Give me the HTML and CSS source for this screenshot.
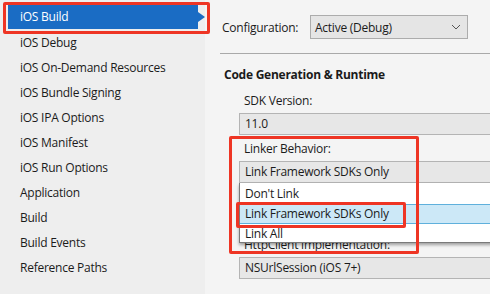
FILE: index.html
```html
<!DOCTYPE html>
<html lang="en">
<head>
    <meta charset="UTF-8">
    <title>iOS Build</title>
    <link rel="stylesheet" href="styles.css">
</head>
<body>
    <div class="sidebar">
        <ul class="nav">
            <li class="nav-item active">iOS Build</li>
            <li class="nav-item">iOS Debug</li>
            <li class="nav-item">iOS On-Demand Resources</li>
            <li class="nav-item">iOS Bundle Signing</li>
            <li class="nav-item">iOS IPA Options</li>
            <li class="nav-item">iOS Manifest</li>
            <li class="nav-item">iOS Run Options</li>
            <li class="nav-item">Application</li>
            <li class="nav-item">Build</li>
            <li class="nav-item">Build Events</li>
            <li class="nav-item">Reference Paths</li>
        </ul>
    </div>

    <div class="main">
        <div class="config-row">
            <span class="config-label">Configuration:</span>
            <div class="combo config-combo">
                <span>Active (Debug)</span>
                <svg class="chevron" width="10" height="6" viewBox="0 0 10 6">
                    <path d="M1 1 L5 5 L9 1" fill="none" stroke="#555" stroke-width="1"/>
                </svg>
            </div>
        </div>

        <div class="separator"></div>

        <h3 class="section-title">Code Generation &amp; Runtime</h3>

        <div class="field">
            <div class="field-label">SDK Version:</div>
            <div class="combo field-box">11.0</div>
        </div>

        <div class="field linker">
            <div class="field-label">Linker Behavior:</div>
            <div class="combo field-box">Link Framework SDKs Only</div>
            <!-- open dropdown list -->
            <ul class="popup">
                <li class="popup-item">Don't Link</li>
                <li class="popup-item selected">Link Framework SDKs Only</li>
                <li class="popup-item">Link All</li>
            </ul>
        </div>

        <!-- field fully covered by the open list -->
        <div class="field">
            <div class="field-label"></div>
            <div class="combo field-box"></div>
        </div>

        <div class="field">
            <div class="field-label">HttpClient implementation:</div>
            <div class="combo field-box">NSUrlSession (iOS 7+)</div>
        </div>
    </div>

    <!-- red annotation boxes -->
    <div class="mark mark-nav"></div>
    <div class="mark mark-linker"></div>
    <div class="mark mark-option"></div>
</body>
</html>
```

FILE: styles.css
```css
body {
    font-family: "Open Sans", "Noto Sans", sans-serif;
    font-size: 12px;
    letter-spacing: -0.25px;
    color: #1b1b1b;
    margin: 0;
    width: 490px;
    height: 294px;
    overflow: hidden;
    display: flex;
    background-color: #f4f4f4;
    position: relative;
}
.sidebar {
    width: 205px;
    flex-shrink: 0;
    background-color: #eeeeee;
}
.nav {
    list-style: none;
    margin: 0;
    padding: 5px 0 0 0;
}
.nav-item {
    height: 25px;
    line-height: 25px;
    padding-left: 20px;
}
.nav-item.active {
    background-color: #1a6cc4;
    color: #fff;
    margin-left: 8px;
    padding-left: 12px;
    width: 178px;
    height: 24px;
    line-height: 24px;
    margin-bottom: 1px;
    position: relative;
}
/* little arrow pointing at the page */
.nav-item.active::after {
    content: "";
    position: absolute;
    left: 190px;
    top: 7px;
    border-left: 7px solid #1a6cc4;
    border-top: 5px solid transparent;
    border-bottom: 5px solid transparent;
}
.main {
    flex: 1;
    padding-left: 15px;
    min-width: 0;
}
.config-row {
    display: flex;
    align-items: center;
    margin-top: 15px;
    height: 24px;
    padding-left: 2px;
}
.config-label {
    width: 88px;
}
.combo {
    background-color: #e5e5e5;
    border: 1px solid #acacac;
    box-sizing: border-box;
}
.config-combo {
    width: 158px;
    height: 24px;
    display: flex;
    align-items: center;
    justify-content: space-between;
    padding: 0 6px 0 4px;
}
.chevron {
    display: block;
}
.separator {
    height: 1px;
    background-color: #a9a9a9;
    margin-top: 14px;
}
.section-title {
    font-size: 12px;
    font-weight: bold;
    margin: 12px 0 0 4px;
    line-height: 18px;
}
.field {
    margin-left: 19px;
    margin-right: -20px;
    margin-bottom: 5px;
}
.section-title + .field {
    margin-top: 8px;
}
.field-label {
    height: 17px;
    line-height: 17px;
    padding-left: 5px;
    margin-bottom: 4px;
}
.field-box {
    height: 22px;
    line-height: 20px;
    padding-left: 5px;
    background-color: #e7e7e7;
    border-color: #b4b4b4;
}
.linker {
    position: relative;
}
.popup {
    position: absolute;
    top: 100%;
    left: 0;
    right: 0;
    margin: 0;
    padding: 1px 0 0 0;
    list-style: none;
    background-color: #fff;
    border: 1px solid #7a7a7a;
    border-top: none;
    height: 60px;
    box-sizing: border-box;
    box-shadow: 0 2px 3px rgba(0, 0, 0, 0.35);
    z-index: 2;
}
.popup-item {
    height: 20px;
    line-height: 20px;
    padding-left: 5px;
}
.popup-item.selected {
    background-color: #cce8f7;
    border-top: 1px solid #5fb0dc;
    border-bottom: 1px solid #5fb0dc;
    height: 18px;
    line-height: 18px;
}
/* Red highlight rectangles */
.mark {
    position: absolute;
    border: 3px solid #ee3524;
    border-radius: 2px;
    box-sizing: border-box;
    z-index: 5;
}
.mark-nav {
    left: 3px;
    top: 2px;
    width: 207px;
    height: 32px;
}
.mark-linker {
    left: 229px;
    top: 136px;
    width: 190px;
    height: 118px;
}
.mark-option {
    left: 236px;
    top: 202px;
    width: 170px;
    height: 26px;
}
```
